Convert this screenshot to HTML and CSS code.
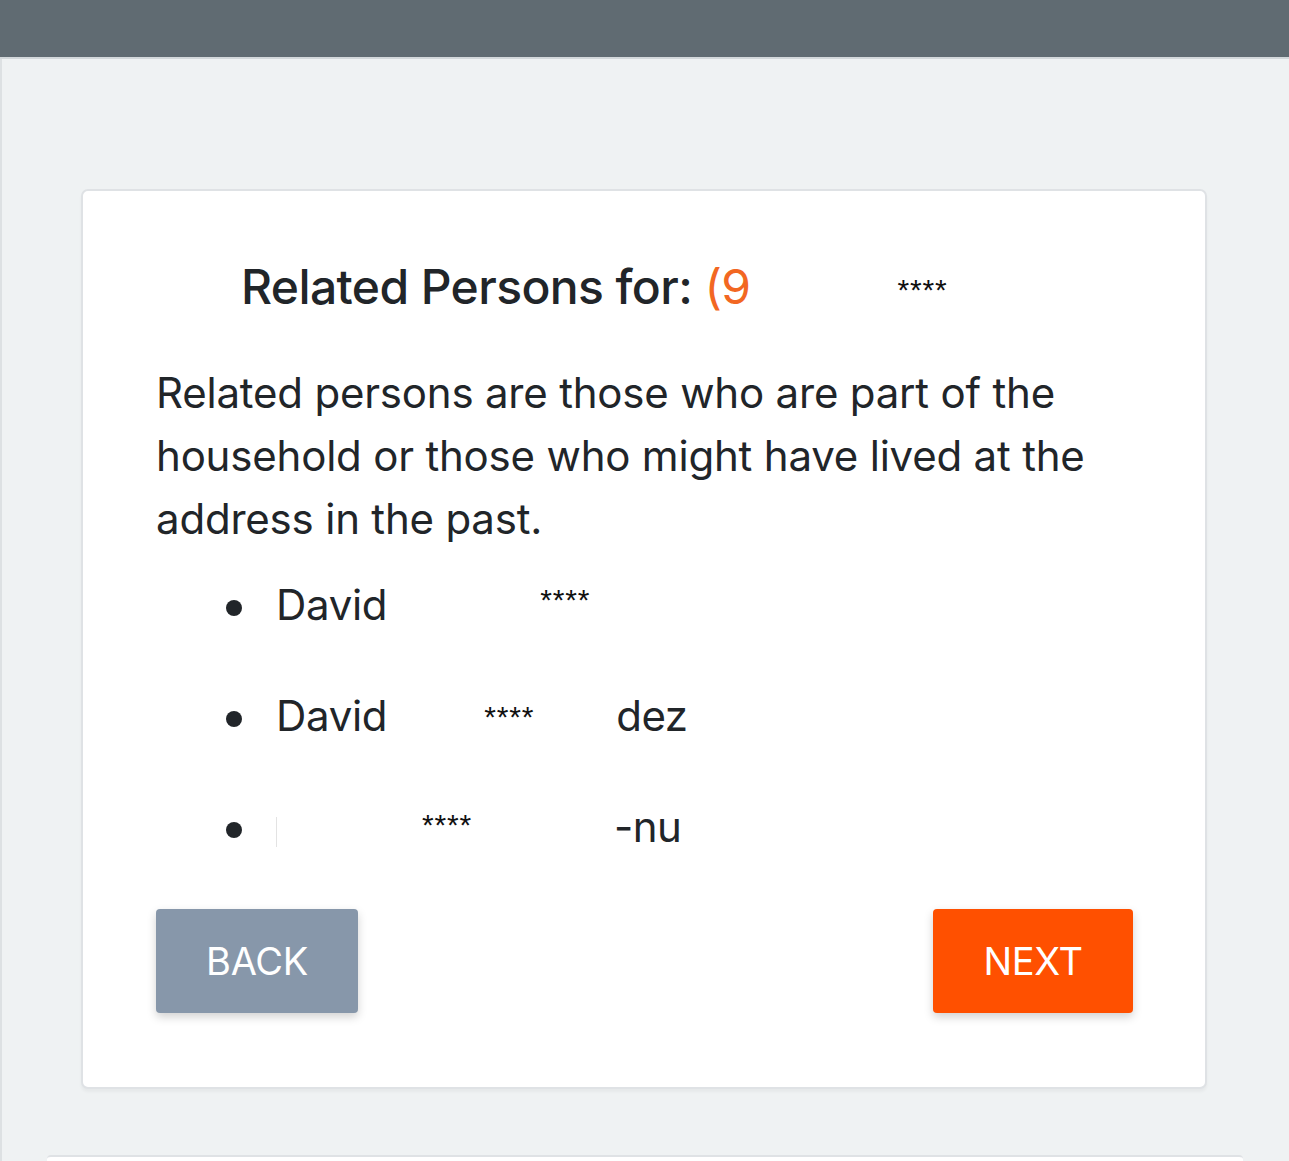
FILE: index.html
```html
<!DOCTYPE html>
<html lang="en">
<head>
<meta charset="utf-8">
<title>Related Persons</title>
<link rel="stylesheet" href="styles.css">
</head>
<body>
<header class="topbar"></header>
<main class="page">
  <section class="card">
    <h1 class="title">Related Persons for: <span class="phone">(9</span><span class="mask mask-title">****</span></h1>
    <p class="intro">Related persons are those who are part of the household or those who might have lived at the address in the past.</p>
    <ul class="people">
      <li><span class="name">David</span><span class="mask m1">****</span></li>
      <li><span class="name">David</span><span class="mask m2">****</span><span class="tail t2">dez</span></li>
      <li><span class="edge"></span><span class="mask m3">****</span><span class="tail t3">-nu</span></li>
    </ul>
    <div class="actions">
      <button class="btn btn-back" type="button">BACK</button>
      <button class="btn btn-next" type="button">NEXT</button>
    </div>
  </section>
  <div class="card-next"></div>
</main>
</body>
</html>
```

FILE: styles.css
```css
html, body {
  margin: 0;
  padding: 0;
}
body {
  background: #eff2f3;
  font-family: Inter, "Noto Sans", "Liberation Sans", sans-serif;
  color: #212529;
  height: 1161px;
  overflow: hidden;
}
.topbar {
  height: 57px;
  background: #606b72;
  border-bottom: 2px solid #d3d8db;
}
.page {
  border-left: 2px solid #dde1e3;
  padding-top: 130px;
  height: 1102px;
  box-sizing: border-box;
  overflow: hidden;
}
.card {
  margin: 0 82px 0 79px;
  background: #fff;
  border: 2px solid #dfe2e5;
  border-radius: 7px;
  box-shadow: 0 3px 3px rgba(0, 0, 0, 0.04);
  padding: 66px 72px 74px 73px;
}
.title {
  margin: 0 0 44px;
  padding-left: 85px;
  font-size: 48px;
  line-height: 60px;
  font-weight: 500;
  letter-spacing: -0.6px;
  white-space: nowrap;
}
.phone {
  color: #f26722;
  font-weight: 400;
}
.mask {
  display: inline-block;
  font-family: "Liberation Sans", Arial, sans-serif;
  font-weight: 400;
  color: #111;
  font-size: 30px;
  line-height: 1;
  letter-spacing: 0.8px;
}
.mask-title {
  margin-left: 147px;
  vertical-align: 4px;
}
.intro {
  margin: 0 0 23px;
  font-size: 42px;
  line-height: 63px;
  letter-spacing: -0.2px;
}
.people {
  list-style: none;
  margin: 0 0 51px;
  padding: 0;
}
.people li {
  display: flex;
  align-items: baseline;
  font-size: 42px;
  line-height: 63px;
  height: 63px;
  margin-bottom: 48px;
  padding-left: 120px;
  position: relative;
}
.people li:last-child {
  margin-bottom: 0;
}
.people li::before {
  content: "";
  position: absolute;
  left: 70px;
  top: 27px;
  width: 16px;
  height: 16px;
  border-radius: 50%;
  background: #212529;
}
.name {
  letter-spacing: -0.3px;
}
.m1 {
  margin-left: 153px;
  align-self: flex-start;
  margin-top: 12px;
}
.m2 {
  margin-left: 97px;
  align-self: flex-start;
  margin-top: 18px;
}
.t2 {
  margin-left: 82px;
  letter-spacing: -0.5px;
}
.edge {
  width: 1px;
  height: 30px;
  background: #e3e3e3;
  align-self: flex-start;
  margin-top: 22px;
}
.m3 {
  margin-left: 145px;
  align-self: flex-start;
  margin-top: 15px;
}
.t3 {
  margin-left: 142px;
  letter-spacing: -0.5px;
}
.actions {
  display: flex;
  justify-content: space-between;
}
.btn {
  height: 104px;
  border: 0;
  border-radius: 4px;
  color: #fff;
  font-family: Inter, "Noto Sans", sans-serif;
  font-size: 38px;
  font-weight: 400;
  letter-spacing: -0.3px;
  padding: 0;
  box-shadow: 0 4px 10px rgba(0, 0, 0, 0.18);
}
.btn-back {
  width: 202px;
  background: #8797aa;
}
.btn-next {
  width: 200px;
  background: #ff5000;
}
.card-next {
  margin: 66px 46px 0 45px;
  height: 40px;
  background: #fff;
  border-top: 2px solid #dfe2e5;
  border-radius: 4px 4px 0 0;
}
```
